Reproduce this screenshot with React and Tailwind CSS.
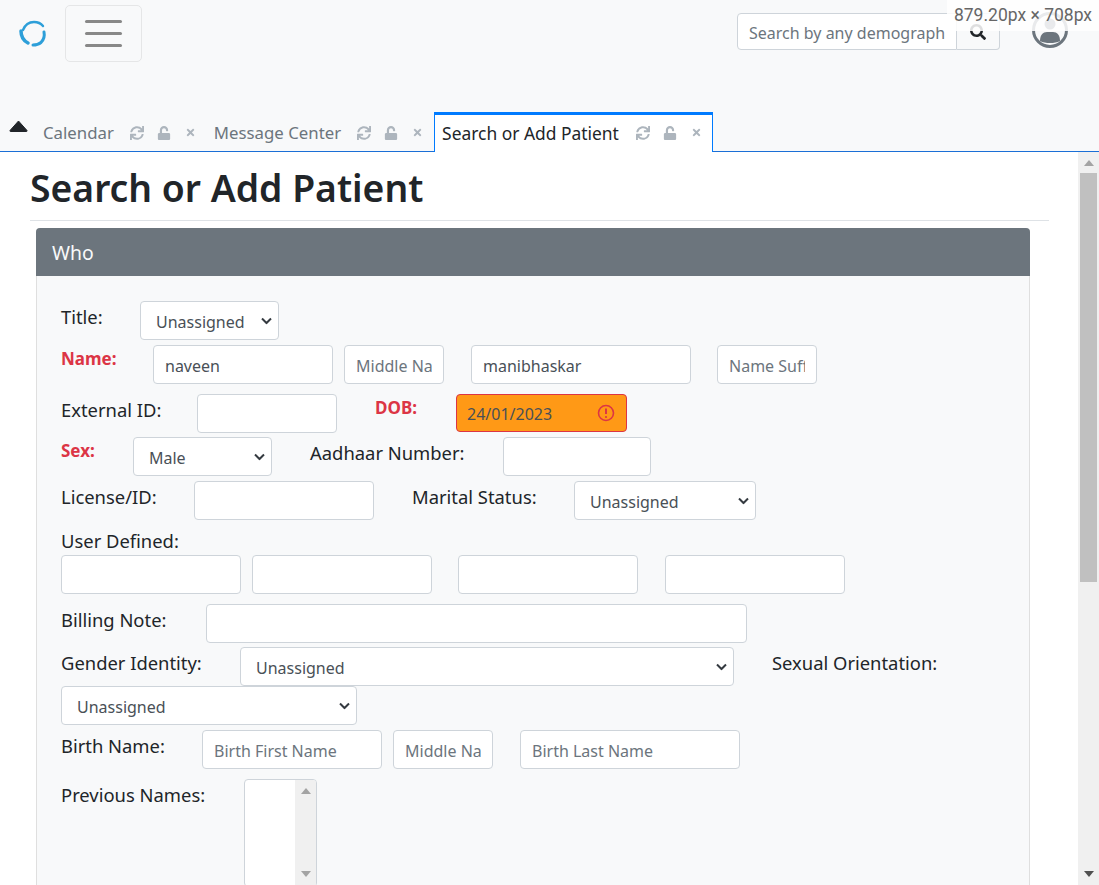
import { FaSync, FaUnlock, FaTimes, FaSearch } from "react-icons/fa";

function Chevron() {
  return (
    <svg
      className="pointer-events-none absolute right-[7px] top-1/2 -translate-y-1/2 text-[#343a40]"
      width="11"
      height="7"
      viewBox="0 0 11 7"
      fill="none"
      stroke="currentColor"
      strokeWidth="2"
    >
      <path d="M1 1l4.5 4.5L10 1" />
    </svg>
  );
}

function Select({ value = "Unassigned", className = "" }) {
  return (
    <div className={`relative h-[39px] shrink-0 ${className}`}>
      <select
        defaultValue={value}
        className="h-full w-full appearance-none rounded-[4px] border border-[#ced4da] bg-white pl-[15px] pr-6 pt-[3px] text-base text-[#495057]"
      >
        <option>{value}</option>
      </select>
      <Chevron />
    </div>
  );
}

function Input({ className = "", ...props }) {
  return (
    <input
      type="text"
      className={`h-[39px] shrink-0 rounded-[4px] border border-[#ced4da] bg-white px-[11px] pt-[2px] text-base text-[#495057] placeholder:text-[#6c757d] ${className}`}
      {...props}
    />
  );
}

function Label({ className = "", children }) {
  return <span className={`shrink-0 text-[18.4px] leading-6 text-[#212529] ${className}`}>{children}</span>;
}

function RedLabel({ className = "", children }) {
  return <span className={`shrink-0 text-[17px] font-bold leading-6 text-[#dc3545] ${className}`}>{children}</span>;
}

function Tab({ title, active }) {
  return (
    <div
      className={
        active
          ? "relative z-10 -mb-px ml-px flex h-10 items-center border-x border-t-[3px] border-x-[#007bff] border-t-[#007bff] bg-white pb-[2px] pl-[7px] text-[#212529]"
          : "flex h-10 items-center pl-[8px] pt-px text-[#6c757d]"
      }
    >
      <span className={active ? "text-[17.4px] leading-6" : "text-[16.8px] leading-6"}>{title}</span>
      <div className={active ? "ml-[17px] flex items-center text-[#adb5bd]" : "ml-[16px] flex items-center text-[#adb5bd]"}>
        <FaSync className="h-[14px] w-[14px]" />
        <FaUnlock className="ml-[13px] h-[14px] w-[14px]" />
        <FaTimes className="ml-[14px] h-[11px] w-[11px]" />
      </div>
      <div className="w-[10px]" />
    </div>
  );
}

export default function App() {
  return (
    <div className="relative h-[885px] w-[1099px] overflow-hidden bg-white font-['Noto_Sans',sans-serif] text-base">
      {/* top bar */}
      <nav className="flex h-[112px] items-start bg-[#f8f9fa]">
        <svg className="ml-[18px] mt-[19px]" width="29" height="29" viewBox="0 0 29 29" fill="none" stroke="#2d9fd9" strokeLinecap="round">
          <path d="M5 11C7 6 11 3 16 3c4 0 7 1.500 9 4" strokeWidth="2.400" />
          <path d="M3 12c0 6 3 10 7 12" strokeWidth="3.500" />
          <path d="M26 13c1 5-.5 8-3 10.500-2.500 2-5 2.500-8 2.500" strokeWidth="3" />
        </svg>
        <button className="ml-[18px] mt-[5px] flex h-[57px] w-[77px] flex-col items-center justify-center gap-[9px] rounded-[5px] border border-[#e5e6e7]">
          <span className="h-[3px] w-[37px] rounded-sm bg-[#888888]" />
          <span className="h-[3px] w-[37px] rounded-sm bg-[#888888]" />
          <span className="h-[3px] w-[37px] rounded-sm bg-[#888888]" />
        </button>
        <div className="ml-auto mr-[99px] mt-[13px] flex h-[37px] w-[263px]">
          <input
            type="text"
            placeholder="Search by any demographics"
            className="h-full w-[220px] rounded-l-[4px] border border-[#ced4da] bg-white px-[11px] pt-[2px] text-base text-[#495057] placeholder:text-[#6c757d]"
          />
          <button className="flex h-full w-[43px] items-center justify-center rounded-r-[4px] border border-l-0 border-[#ced4da] border-l-[#aaaaaa]">
            <FaSearch className="h-[16px] w-[16px] text-[#212529]" />
          </button>
        </div>
      </nav>
      <svg className="absolute left-[1032px] top-[12px]" width="36" height="36" viewBox="0 0 36 36" fill="none">
        <circle cx="18" cy="18" r="16.5" stroke="#6c757d" strokeWidth="3" />
        <circle cx="18" cy="12" r="5.5" fill="#6c757d" />
        <path d="M8 29c0-6 3-9 7-9h6c4 0 7 3 7 9-3 1.500-6 2-10 2s-7-.5-10-2z" fill="#6c757d" />
      </svg>

      {/* tabs */}
      <div className="flex h-10 border-b border-[#1b6fd6] bg-[#f8f9fa]">
        <svg className="ml-[9px] mt-[8px] shrink-0" width="19" height="12" viewBox="0 0 19 12">
          <path d="M9.500 1L18 10.500q.3 1-.6 1H1.600q-.9 0-.6-1z" fill="#212529" stroke="#212529" strokeLinejoin="round" />
        </svg>
        <div className="ml-[7px] flex">
          <Tab title="Calendar" />
          <Tab title="Message Center" />
          <Tab title="Search or Add Patient" active />
        </div>
      </div>

      {/* page body */}
      <div className="flex h-[733px]">
        <main className="w-[1078px] shrink-0 overflow-hidden pl-[30px]">
          <div className="mr-[29px] h-[69px] border-b border-[#dee2e6]">
            <h1 className="pt-[11px] text-[37.300px] font-semibold leading-[50px] text-[#212529]">Search or Add Patient</h1>
          </div>
          <section className="ml-[6px] mr-[48px] mt-[7px] h-[700px] rounded-t-[4px] border border-[#dfdfdf] bg-[#f8f9fa]">
            <div className="-mx-px -mt-px h-[48px] rounded-t-[4px] bg-[#6c757d] pl-[16px] text-[19.400px] leading-[50px] text-[#f8f9fa]">Who</div>

            <div className="pl-[24px] pt-[25px]">
              <div className="flex h-[44px]">
                <Label className="mt-[4px] w-[79px]">Title:</Label>
                <Select className="w-[139px]" />
              </div>

              <div className="flex h-[49px]">
                <RedLabel className="mt-[2px] w-[92px]">Name:</RedLabel>
                <Input className="w-[180px]" defaultValue="naveen" />
                <Input className="ml-[11px] w-[100px]" placeholder="Middle Name" />
                <Input className="ml-[27px] w-[220px]" defaultValue="manibhaskar" />
                <Input className="ml-[26px] w-[100px]" placeholder="Name Suffix" />
              </div>

              <div className="flex h-[43px]">
                <Label className="mt-[4px] w-[136px]">External ID:</Label>
                <Input className="h-[38px] w-[140px]" />
                <RedLabel className="ml-[38px] mt-[2px] w-[81px]">DOB:</RedLabel>
                <div className="relative h-[38px] w-[171px] shrink-0">
                  <input
                    type="text"
                    defaultValue="24/01/2023"
                    className="h-full w-full rounded-[4px] border border-[#dc3545] bg-[#ff9916] px-[10px] pt-px text-base text-[#495057]"
                  />
                  <svg className="absolute right-[12px] top-[10px]" width="18" height="18" viewBox="0 0 18 18" fill="none" stroke="#dc3545">
                    <circle cx="9" cy="9" r="7.500" strokeWidth="1.600" />
                    <path d="M9 4.500v5.500" strokeWidth="2" />
                    <circle cx="9" cy="13" r="1.100" fill="#dc3545" stroke="none" />
                  </svg>
                </div>
              </div>

              <div className="flex h-[44px]">
                <RedLabel className="mt-[2px] w-[72px]">Sex:</RedLabel>
                <Select value="Male" className="w-[139px]" />
                <Label className="ml-[38px] mt-[4px] w-[193px]">Aadhaar Number:</Label>
                <Input className="w-[148px]" />
              </div>

              <div className="flex h-[47px]">
                <Label className="mt-[4px] w-[133px]">License/ID:</Label>
                <Input className="w-[180px]" />
                <Label className="ml-[38px] mt-[4px] w-[162px]">Marital Status:</Label>
                <Select className="w-[182px]" />
              </div>

              <div className="h-[27px] pt-px">
                <Label>User Defined:</Label>
              </div>

              <div className="flex h-[49px]">
                <Input className="w-[180px]" />
                <Input className="ml-[11px] w-[180px]" />
                <Input className="ml-[26px] w-[180px]" />
                <Input className="ml-[27px] w-[180px]" />
              </div>

              <div className="flex h-[43px]">
                <Label className="mt-[4px] w-[145px]">Billing Note:</Label>
                <Input className="h-[38px] w-[541px]" />
              </div>

              <div className="flex h-[39px]">
                <Label className="mt-[4px] w-[179px]">Gender Identity:</Label>
                <Select className="w-[494px]" />
                <Label className="ml-[38px] mt-[4px]">Sexual Orientation:</Label>
              </div>

              <div className="h-[44px]">
                <Select className="w-[296px]" />
              </div>

              <div className="flex h-[49px]">
                <Label className="mt-[4px] w-[141px]">Birth Name:</Label>
                <Input className="w-[180px]" placeholder="Birth First Name" />
                <Input className="ml-[11px] w-[100px]" placeholder="Middle Name" />
                <Input className="ml-[27px] w-[220px]" placeholder="Birth Last Name" />
              </div>

              <div className="flex">
                <Label className="mt-[4px] w-[183px]">Previous Names:</Label>
                <div className="flex h-[108px] w-[73px] shrink-0 overflow-hidden rounded-[4px] border border-[#ced4da] bg-white">
                  <div className="flex-1" />
                  <div className="flex h-full w-[21px] flex-col items-center justify-between bg-[#f0f0f0] pb-[9px] pt-[8px]">
                    <svg width="10" height="6" viewBox="0 0 10 6"><path d="M5 0l5 6H0z" fill="#a3a3a3" /></svg>
                    <svg width="10" height="6" viewBox="0 0 10 6"><path d="M0 0h10L5 6z" fill="#a3a3a3" /></svg>
                  </div>
                </div>
              </div>
            </div>
          </section>
        </main>

        {/* page scrollbar */}
        <div className="flex w-[21px] flex-col items-center bg-[#f0f0f0]">
          <svg className="mt-[8px]" width="10" height="6" viewBox="0 0 10 6"><path d="M5 0l5 6H0z" fill="#a3a3a3" /></svg>
          <div className="mt-[7px] h-[409px] w-[17px] bg-[#c0c0c0]" />
          <svg className="mb-[8px] mt-auto" width="10" height="6" viewBox="0 0 10 6"><path d="M0 0h10L5 6z" fill="#505050" /></svg>
        </div>
      </div>

      {/* devtools size readout */}
      <div className="absolute right-0 top-0 flex h-[31px] w-[152px] items-center justify-center bg-white/85 font-['Roboto',sans-serif] text-[17.500px] text-[#666666]">
        879.20px × 708px
      </div>
    </div>
  );
}
